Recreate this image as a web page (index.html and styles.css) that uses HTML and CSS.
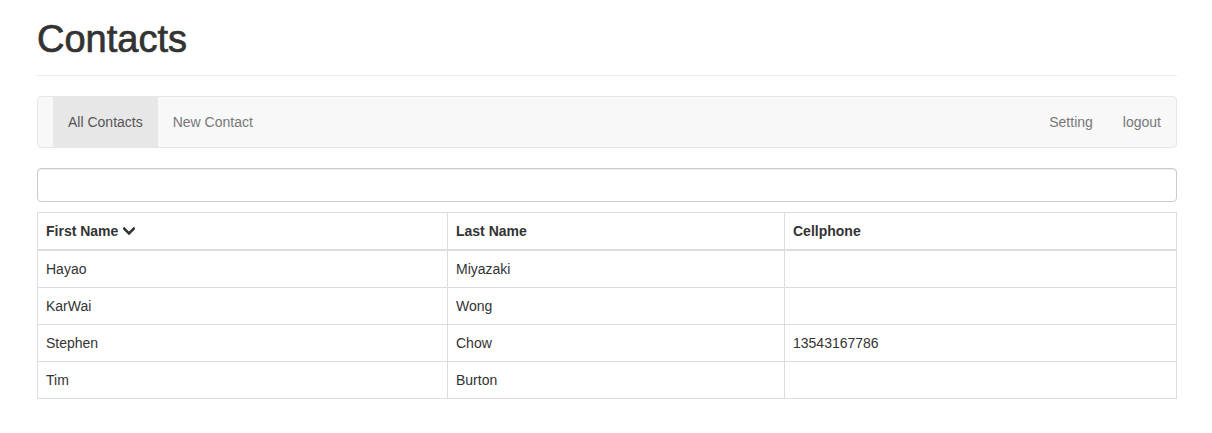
FILE: index.html
```html
<!DOCTYPE html>
<html>
<head>
<meta charset="utf-8">
<link rel="stylesheet" href="styles.css">
</head>
<body>
<div class="container">
  <div class="page-header">
    <h1>Contacts</h1>
  </div>
  <nav class="navbar">
    <ul class="nav">
      <li class="active"><a>All Contacts</a></li>
      <li><a>New Contact</a></li>
    </ul>
    <ul class="nav nav-right">
      <li><a>Setting</a></li>
      <li><a>logout</a></li>
    </ul>
  </nav>
  <input class="form-control" type="text">
  <table class="table">
    <thead>
      <tr>
        <th class="c1">First Name <svg class="chev" width="12" height="9" viewBox="0 0 12 9"><path d="M1.2 1.6 L6 6.4 L10.8 1.6" fill="none" stroke="#333" stroke-width="2.6" stroke-linecap="square"/></svg></th>
        <th class="c2">Last Name</th>
        <th>Cellphone</th>
      </tr>
    </thead>
    <tbody>
      <tr><td>Hayao</td><td>Miyazaki</td><td></td></tr>
      <tr><td>KarWai</td><td>Wong</td><td></td></tr>
      <tr><td>Stephen</td><td>Chow</td><td>13543167786</td></tr>
      <tr><td>Tim</td><td>Burton</td><td></td></tr>
    </tbody>
  </table>
</div>
</body>
</html>
```
FILE: styles.css
```css
* { box-sizing: border-box; }
html, body { margin: 0; padding: 0; background: #fff; }
body {
  font-family: "Liberation Sans", Arial, sans-serif;
  font-size: 14px;
  line-height: 20px;
  color: #333;
}
.container {
  width: 1171px;
  margin: 0 0 0 21px;
  padding: 0 15px 0 16px;
}
.page-header {
  padding-bottom: 14px;
  border-bottom: 1px solid #eee;
  margin-bottom: 20px;
}
h1 {
  margin: 0;
  padding-top: 17px;
  font-size: 38px;
  line-height: 44px;
  font-weight: 500;
  color: #333;
  -webkit-text-stroke: 0.7px #333;
}
.navbar {
  display: flex;
  justify-content: space-between;
  min-height: 52px;
  background: #f8f8f8;
  border: 1px solid #e7e7e7;
  border-radius: 4px;
  padding: 0 15px;
  margin-bottom: 20px;
}
.nav {
  display: flex;
  list-style: none;
  margin: 0;
  padding: 0;
}
.nav-right { margin-right: -15px; }
.nav a {
  display: block;
  padding: 15px;
  line-height: 20px;
  color: #777;
}
.nav .active a {
  background: #e7e7e7;
  color: #555;
}
.form-control {
  display: block;
  width: 100%;
  height: 34px;
  border: 1px solid #ccc;
  border-radius: 4px;
  box-shadow: inset 0 1px 1px rgba(0,0,0,.075);
  margin: 0 0 10px 0;
  padding: 6px 12px;
  font: inherit;
}
.table {
  width: 100%;
  border-collapse: collapse;
  border: 1px solid #ddd;
}
.table th, .table td {
  border: 1px solid #ddd;
  padding: 8px;
  text-align: left;
  vertical-align: top;
  line-height: 20px;
}
.table th {
  font-weight: bold;
  border-bottom: 2px solid #ddd;
}
.c1 { width: 410px; }
.c2 { width: 337px; }
.chev { vertical-align: 0px; margin-left: 1px; }
```
